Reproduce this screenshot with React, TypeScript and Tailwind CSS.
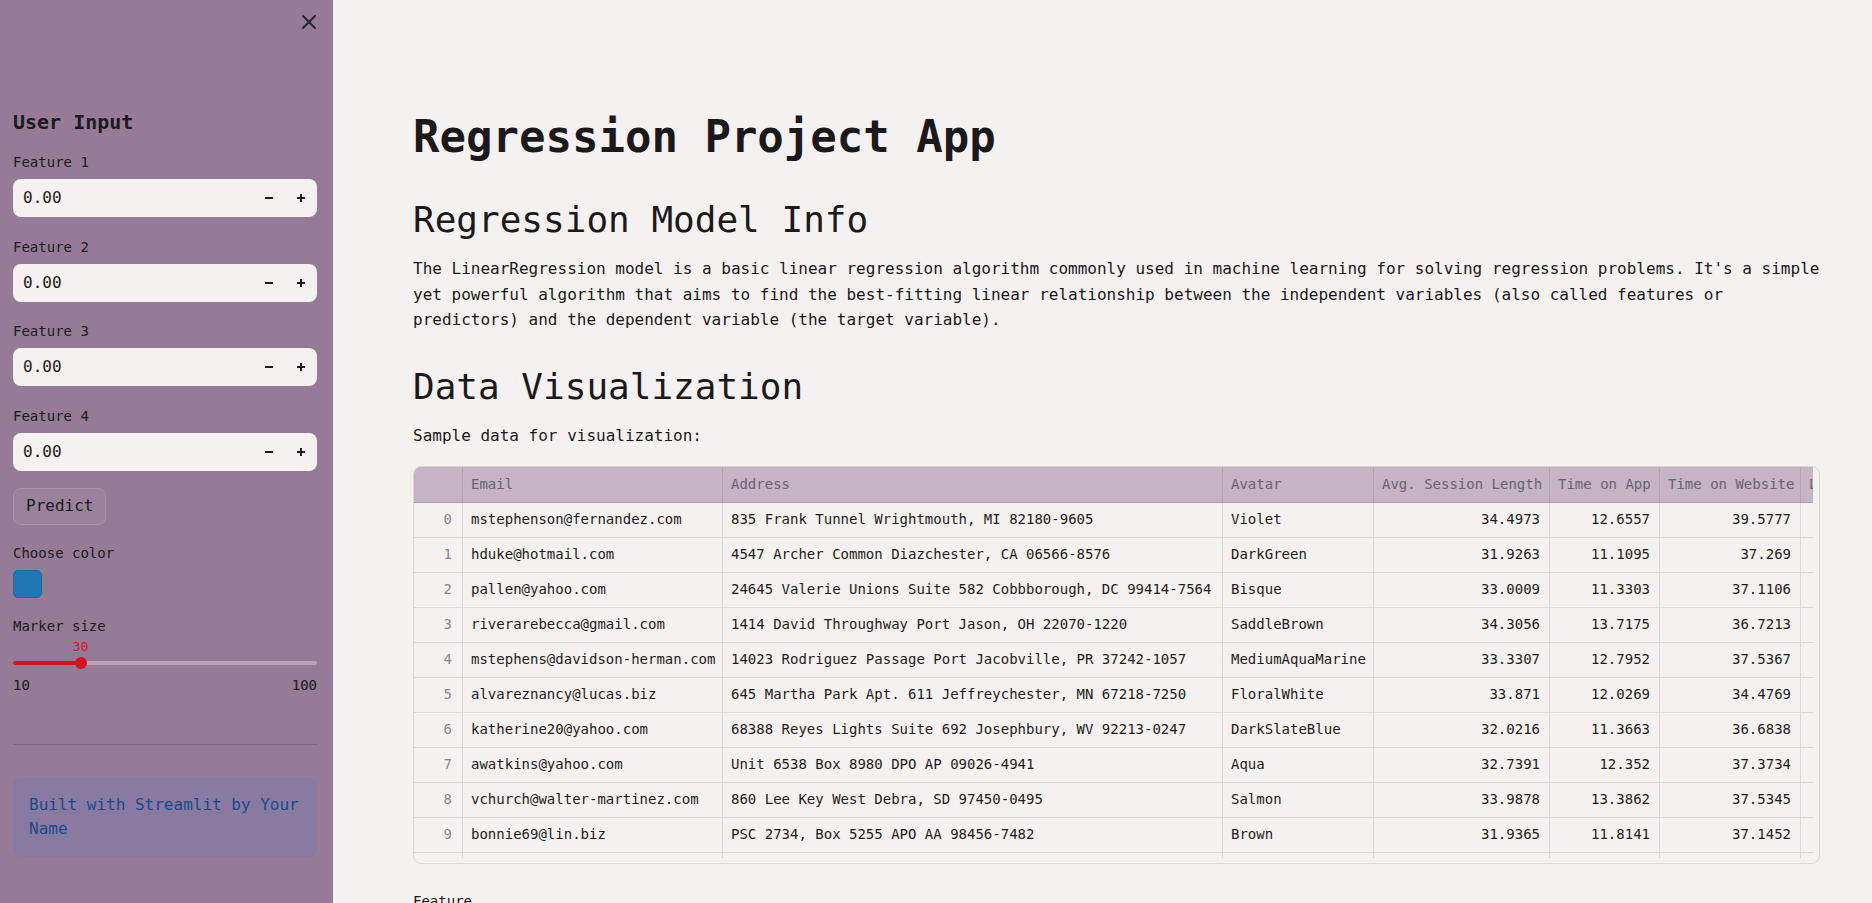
import { X } from "lucide-react"

type Col = { label: string; w: number; num?: boolean }

const COLS: Col[] = [
  { label: "", w: 49, num: true },
  { label: "Email", w: 260 },
  { label: "Address", w: 500 },
  { label: "Avatar", w: 151 },
  { label: "Avg. Session Length", w: 176, num: true },
  { label: "Time on App", w: 110, num: true },
  { label: "Time on Website", w: 141, num: true },
  { label: "Length of Membership", w: 220, num: true },
]

// last column scrolls off to the right, its values are not in view
const ROWS: string[][] = [
  ["0", "mstephenson@fernandez.com", "835 Frank Tunnel Wrightmouth, MI 82180-9605", "Violet", "34.4973", "12.6557", "39.5777", ""],
  ["1", "hduke@hotmail.com", "4547 Archer Common Diazchester, CA 06566-8576", "DarkGreen", "31.9263", "11.1095", "37.269", ""],
  ["2", "pallen@yahoo.com", "24645 Valerie Unions Suite 582 Cobbborough, DC 99414-7564", "Bisque", "33.0009", "11.3303", "37.1106", ""],
  ["3", "riverarebecca@gmail.com", "1414 David Throughway Port Jason, OH 22070-1220", "SaddleBrown", "34.3056", "13.7175", "36.7213", ""],
  ["4", "mstephens@davidson-herman.com", "14023 Rodriguez Passage Port Jacobville, PR 37242-1057", "MediumAquaMarine", "33.3307", "12.7952", "37.5367", ""],
  ["5", "alvareznancy@lucas.biz", "645 Martha Park Apt. 611 Jeffreychester, MN 67218-7250", "FloralWhite", "33.871", "12.0269", "34.4769", ""],
  ["6", "katherine20@yahoo.com", "68388 Reyes Lights Suite 692 Josephbury, WV 92213-0247", "DarkSlateBlue", "32.0216", "11.3663", "36.6838", ""],
  ["7", "awatkins@yahoo.com", "Unit 6538 Box 8980 DPO AP 09026-4941", "Aqua", "32.7391", "12.352", "37.3734", ""],
  ["8", "vchurch@walter-martinez.com", "860 Lee Key West Debra, SD 97450-0495", "Salmon", "33.9878", "13.3862", "37.5345", ""],
  ["9", "bonnie69@lin.biz", "PSC 2734, Box 5255 APO AA 98456-7482", "Brown", "31.9365", "11.8141", "37.1452", ""],
  ["", "", "", "", "", "", "", ""],
]

function NumberInput() {
  return (
    <div className="flex h-[38px] items-center rounded-lg bg-[#f5f1f0]">
      <span className="flex-1 pl-[10px] text-[16px] text-[#1c1a1d]">0.00</span>
      <button className="flex h-full w-[32px] items-center justify-center">
        <svg width="10" height="10" viewBox="0 0 10 10">
          <rect x="1" y="4" width="8" height="2" fill="#1c1a1d" />
        </svg>
      </button>
      <button className="flex h-full w-[32px] items-center justify-center">
        <svg width="10" height="10" viewBox="0 0 10 10">
          <rect x="1" y="4" width="8" height="2" fill="#1c1a1d" />
          <rect x="4" y="1" width="2" height="8" fill="#1c1a1d" />
        </svg>
      </button>
    </div>
  )
}

function Sidebar() {
  return (
    <aside className="relative h-[903px] w-[333px] shrink-0 bg-[#957b97] pl-[13px] pr-[16px] pt-[110px] text-[#1c1a1d]">
      <button className="absolute left-[297px] top-[10px] text-[#2a2230]">
        <X size={24} strokeWidth={2} />
      </button>

      <h3 className="text-[20px] font-bold leading-[24px]">User Input</h3>

      <div className="mt-[20px] flex flex-col gap-[21.5px]">
        {[1, 2, 3, 4].map((n) => (
          <div key={n}>
            <p className="mb-[8px] text-[14px] leading-[17px]">Feature {n}</p>
            <NumberInput />
          </div>
        ))}
      </div>

      <button className="mt-[17px] h-[37px] rounded-lg border border-[#a991ab] bg-[#9a819c] px-3 text-[16px]">
        Predict
      </button>

      <p className="mt-[20.5px] text-[14px] leading-[17px]">Choose color</p>
      <div className="mt-[7.5px] h-[28px] w-[29px] rounded-[5px] border border-[#1a6aa2] bg-[#1f77b4]" />

      <p className="mt-[20.5px] text-[14px] leading-[17px]">Marker size</p>
      <div className="relative h-[39px]">
        <span className="absolute left-[54.5px] top-[2.5px] w-[26px] text-center text-[13px] leading-[17px] text-[#d2161e]">
          30
        </span>
        <div className="absolute left-0 right-0 top-[25.5px] h-[4px] rounded-full bg-[#b9a3bb]" />
        <div className="absolute left-0 top-[25.5px] h-[4px] w-[67.5px] rounded-full bg-[#d2161e]" />
        <div className="absolute left-[61.5px] top-[21.5px] h-[12px] w-[12px] rounded-full bg-[#d2161e]" />
      </div>
      <div className="mt-[3px] flex justify-between text-[14px] leading-[17px]">
        <span>10</span>
        <span>100</span>
      </div>

      <hr className="mt-[50px] border-0 border-t border-[#7e6782]" />

      <div className="mt-[32px] rounded-lg bg-[#887aa0] px-4 py-4 text-[16px] leading-[24px] text-[#1d4a8c]">
        Built with Streamlit by Your Name
      </div>
    </aside>
  )
}

function DataTable() {
  return (
    <div className="flex h-[398px] w-[1407px] overflow-hidden rounded-lg border border-[#dcd5d6]">
      <div className="h-[391px] w-[1399px] shrink-0 overflow-hidden text-[14px]">
        <div className="flex h-[36px] w-max border-b border-[#ad9daf] bg-[#c4b4c4] text-[#6a6272]">
          {COLS.map((c, i) => (
            <div
              key={i}
              style={{ width: c.w }}
              className="flex shrink-0 items-center overflow-hidden whitespace-nowrap border-r border-[#b3a3b5] px-[8px]"
            >
              {c.label}
            </div>
          ))}
        </div>
        {ROWS.map((r, ri) => (
          <div key={ri} className="flex h-[35px] w-max border-b border-[#dcd6d7] text-[#1f1d21]">
            {r.map((v, ci) => (
              <div
                key={ci}
                style={{ width: COLS[ci].w }}
                className={`flex shrink-0 items-center overflow-hidden whitespace-nowrap border-r border-[#dcd6d7] ${
                  COLS[ci].num ? "justify-end pr-[9px]" : "pl-[8px]"
                } ${ci === 0 ? "pr-[10px] text-[#8b8590]" : ""}`}
              >
                {v}
              </div>
            ))}
          </div>
        ))}
      </div>
    </div>
  )
}

export default function App() {
  return (
    <div className="flex h-[903px] w-[1872px] overflow-hidden bg-[#f5f1f0] font-['DejaVu_Sans_Mono',monospace] text-[#1b191c]">
      <Sidebar />
      <main className="h-[903px] flex-1 overflow-hidden pl-[80px] pt-[111px]">
        <div className="w-[1407px]">
          <h1 className="text-[44px] font-bold leading-[1.2]">Regression Project App</h1>
          <h2 className="mt-[34px] text-[36px] font-normal leading-[1.2]">Regression Model Info</h2>
          <p className="mt-[15px] text-[16px] leading-[1.6]">
            The LinearRegression model is a basic linear regression algorithm commonly used in machine learning for
            solving regression problems. It's a simple yet powerful algorithm that aims to find the best-fitting linear
            relationship between the independent variables (also called features or predictors) and the dependent
            variable (the target variable).
          </p>
          <h2 className="mt-[32px] text-[36px] font-normal leading-[1.2]">Data Visualization</h2>
          <p className="mt-[15px] text-[16px] leading-[1.6]">Sample data for visualization:</p>
          <div className="mt-[17px]">
            <DataTable />
          </div>
          <p className="mt-[26px] text-[14px] leading-[1.6]">Feature</p>
        </div>
      </main>
    </div>
  )
}
